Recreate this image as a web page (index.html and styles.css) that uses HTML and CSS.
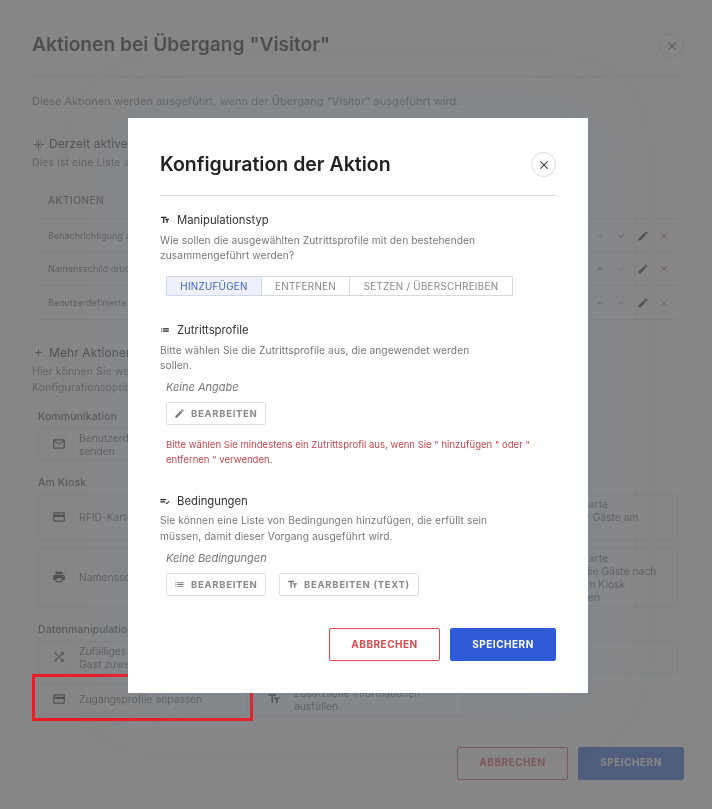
FILE: index.html
```html
<!DOCTYPE html>
<html lang="de">
<head>
<meta charset="utf-8">
<title>Aktionen</title>
<link rel="stylesheet" href="styles.css">
</head>
<body>
<svg class="sprite" xmlns="http://www.w3.org/2000/svg">
<symbol id="i-text" viewBox="0 0 24 24"><path d="M2.5 4v3h5v12h3V7h5V4h-13zm19 5h-9v3h3v7h3v-7h3V9z"/></symbol>
<symbol id="i-list" viewBox="0 0 24 24"><path d="M3 13h2v-2H3v2zm0 4h2v-2H3v2zm0-8h2V7H3v2zm4 4h14v-2H7v2zm0 4h14v-2H7v2zM7 7v2h14V7H7z"/></symbol>
<symbol id="i-edit" viewBox="0 0 24 24"><path d="M3 17.25V21h3.75L17.81 9.94l-3.75-3.75L3 17.25zM20.71 7.04c.39-.39.39-1.02 0-1.41l-2.34-2.34c-.39-.39-1.02-.39-1.41 0l-1.83 1.83 3.75 3.75 1.83-1.83z"/></symbol>
<symbol id="i-rule" viewBox="0 0 24 24"><path d="M1 7h13v3H1zM1 12.500h11v3H1zM13 16.500l3.300 3.300 6.700-6.700-1.500-1.500-5.200 5.200-1.800-1.800z"/></symbol>
<symbol id="i-mail" viewBox="0 0 24 24"><path d="M20 4H4c-1.100 0-1.990.9-1.990 2L2 18c0 1.100.9 2 2 2h16c1.100 0 2-.9 2-2V6c0-1.100-.9-2-2-2zm0 14H4V8l8 5 8-5v10zm-8-7L4 6h16l-8 5z"/></symbol>
<symbol id="i-card" viewBox="0 0 24 24"><path d="M20 4H4c-1.110 0-1.990.89-1.990 2L2 18c0 1.110.89 2 2 2h16c1.110 0 2-.89 2-2V6c0-1.110-.89-2-2-2zm0 14H4v-6h16v6zm0-10H4V6h16v2z"/></symbol>
<symbol id="i-print" viewBox="0 0 24 24"><path d="M19 8H5c-1.660 0-3 1.340-3 3v6h4v4h12v-4h4v-6c0-1.660-1.340-3-3-3zm-3 11H8v-5h8v5zm3-7c-.55 0-1-.45-1-1s.45-1 1-1 1 .45 1 1-.45 1-1 1zm-1-9H6v4h12V3z"/></symbol>
<symbol id="i-shuffle" viewBox="0 0 24 24"><path d="M10.590 9.170L5.410 4 4 5.410l5.170 5.170 1.420-1.410zM14.500 4l2.040 2.040L4 18.590 5.410 20 17.960 7.460 20 9.500V4h-5.500zm.33 9.410l-1.410 1.410 3.130 3.130L14.500 20H20v-5.500l-2.040 2.040-3.130-3.130z"/></symbol>
<symbol id="i-close" viewBox="0 0 24 24"><path d="M19 6.410L17.590 5 12 10.590 6.410 5 5 6.410 10.590 12 5 17.590 6.410 19 12 13.410 17.590 19 19 17.590 13.410 12z"/></symbol>
<symbol id="i-up" viewBox="0 0 24 24"><path d="M12 8l-6 6 1.410 1.410L12 10.830l4.590 4.580L18 14z"/></symbol>
<symbol id="i-down" viewBox="0 0 24 24"><path d="M16.590 8.590L12 13.170 7.410 8.590 6 10l6 6 6-6z"/></symbol>
<symbol id="i-add" viewBox="0 0 24 24"><path d="M19 13h-6v6h-2v-6H5v-2h6V5h2v6h6v2z"/></symbol>
<symbol id="i-flare" viewBox="0 0 24 24"><path d="M7 11H1v2h6v-2zm2.170-3.240L7.050 5.640 5.640 7.050l2.120 2.120 1.410-1.410zM13 1h-2v6h2V1zm5.360 6.050l-1.410-1.410-2.120 2.120 1.410 1.410 2.120-2.120zM17 11v2h6v-2h-6zm-5-2c-1.660 0-3 1.340-3 3s1.340 3 3 3 3-1.340 3-3-1.340-3-3-3zm2.830 7.240l2.120 2.120 1.410-1.410-2.120-2.120-1.410 1.410zm-9.190.71l1.410 1.410 2.120-2.120-1.410-1.410-2.120 2.120zM11 23h2v-6h-2v6z"/></symbol>
</svg>

<main class="page">
  <header class="head">
    <h1 class="page-title">Aktionen bei Übergang "Visitor"</h1>
    <button class="round-close"><svg class="ic14"><use href="#i-close"/></svg></button>
  </header>
  <p class="page-desc">Diese Aktionen werden ausgeführt, wenn der Übergang "Visitor" ausgeführt wird.</p>

  <h2 class="sec-title first"><svg class="ic12"><use href="#i-flare"/></svg>Derzeit aktive Aktionen</h2>
  <p class="sec-desc">Dies ist eine Liste aller derzeit aktiven Aktionen.</p>

  <section class="table">
    <div class="th">AKTIONEN</div>
    <div class="tr"><span>Benachrichtigung an Gastgeber</span><span class="acts"><svg class="dim"><use href="#i-up"/></svg><svg><use href="#i-down"/></svg><svg class="dark"><use href="#i-edit"/></svg><svg class="del"><use href="#i-close"/></svg></span></div>
    <div class="tr"><span>Namensschild drucken</span><span class="acts"><svg><use href="#i-up"/></svg><svg class="dim"><use href="#i-down"/></svg><svg class="dark"><use href="#i-edit"/></svg><svg class="del"><use href="#i-close"/></svg></span></div>
    <div class="tr"><span>Benutzerdefinierte Aktion</span><span class="acts"><svg><use href="#i-up"/></svg><svg class="dim"><use href="#i-down"/></svg><svg class="dark"><use href="#i-edit"/></svg><svg class="del"><use href="#i-close"/></svg></span></div>
  </section>

  <h2 class="sec-title second"><svg class="ic12"><use href="#i-add"/></svg>Mehr Aktionen</h2>
  <p class="sec-desc tall">Hier können Sie weitere Aktionen hinzufügen. Jede Aktion hat eigene<br>Konfigurationsoptionen.</p>

  <h3 class="group g1">Kommunikation</h3>
  <div class="cards">
    <div class="card h33"><svg class="card-ic"><use href="#i-mail"/></svg><span>Benutzerdefinierte E-Mail<br>senden</span></div>
  </div>

  <h3 class="group">Am Kiosk</h3>
  <div class="cards gap8">
    <div class="card h46"><svg class="card-ic"><use href="#i-card"/></svg><span>RFID-Karte ausstellen</span></div>
    <div class="card h46 empty"></div>
    <div class="card h46"><svg class="card-ic"><use href="#i-print"/></svg><span>Gedruckte QR-Karte<br>Ein Ausdruck für Gäste am<br>Kiosk</span></div>
    <div class="card h59"><svg class="card-ic"><use href="#i-print"/></svg><span>Namensschild drucken</span></div>
    <div class="card h59 empty"></div>
    <div class="card h59"><svg class="card-ic"><use href="#i-print"/></svg><span>Gedruckte QR-Karte<br>Eine QR-Karte, die Gäste nach<br>einem Besuch am Kiosk<br>ausdrucken lassen</span></div>
  </div>

  <h3 class="group g3">Datenmanipulation</h3>
  <div class="cards gap9">
    <div class="card h33"><svg class="card-ic"><use href="#i-shuffle"/></svg><span>Zufälliges Attribut dem<br>Gast zuweisen</span></div>
    <div class="card h33 empty"></div>
    <div class="card h33"></div>
    <div class="card h33"><svg class="card-ic"><use href="#i-card"/></svg><span>Zugangsprofile anpassen</span></div>
    <div class="card h33"><svg class="card-ic"><use href="#i-text"/></svg><span>Zusätzliche Informationen<br>ausfüllen</span></div>
  </div>

  <footer class="page-foot">
    <button class="btn btn-cancel">ABBRECHEN</button>
    <button class="btn btn-save">SPEICHERN</button>
  </footer>
</main>

<div class="overlay"></div>
<div class="highlight"></div>

<section class="modal">
  <header class="modal-head">
    <h2 class="modal-title">Konfiguration der Aktion</h2>
    <button class="round-close light"><svg class="ic14"><use href="#i-close"/></svg></button>
  </header>

  <h3 class="m-title m-first"><svg class="m-ic"><use href="#i-text"/></svg>Manipulationstyp</h3>
  <p class="m-desc">Wie sollen die ausgewählten Zutrittsprofile mit den bestehenden<br>zusammengeführt werden?</p>
  <div class="segments">
    <span class="seg active">HINZUFÜGEN</span><span class="seg s2">ENTFERNEN</span><span class="seg s3">SETZEN / ÜBERSCHREIBEN</span>
  </div>

  <h3 class="m-title m-second"><svg class="m-ic"><use href="#i-list"/></svg>Zutrittsprofile</h3>
  <p class="m-desc">Bitte wählen Sie die Zutrittsprofile aus, die angewendet werden<br>sollen.</p>
  <p class="none">Keine Angabe</p>
  <div class="tools"><button class="tool w100"><svg><use href="#i-edit"/></svg>BEARBEITEN</button></div>
  <p class="error">Bitte wählen Sie mindestens ein Zutrittsprofil aus, wenn Sie " hinzufügen " oder "<br>entfernen " verwenden.</p>

  <h3 class="m-title m-third"><svg class="m-ic"><use href="#i-rule"/></svg>Bedingungen</h3>
  <p class="m-desc loose">Sie können eine Liste von Bedingungen hinzufügen, die erfüllt sein<br>müssen, damit dieser Vorgang ausgeführt wird.</p>
  <p class="none n2">Keine Bedingungen</p>
  <div class="tools">
    <button class="tool w100"><svg><use href="#i-list"/></svg>BEARBEITEN</button>
    <button class="tool w140"><svg><use href="#i-text"/></svg>BEARBEITEN (TEXT)</button>
  </div>

  <footer class="modal-foot">
    <button class="btn btn-cancel">ABBRECHEN</button>
    <button class="btn btn-save">SPEICHERN</button>
  </footer>
</section>
</body>
</html>
```

FILE: styles.css
```css
* { box-sizing: border-box; }
html, body { margin: 0; padding: 0; }
body {
  width: 712px;
  height: 809px;
  overflow: hidden;
  position: relative;
  background: #fff;
  font-family: Inter, "Liberation Sans", sans-serif;
  color: #333;
  filter: blur(.3px);
}
h1, h2, h3, p { margin: 0; }
button { font-family: inherit; cursor: pointer; }
.sprite { display: none; }
svg { fill: currentColor; display: block; }

.page { padding: 0 28px 0 32px; height: 809px; }
.head {
  height: 77px;
  padding-top: 33px;
  display: flex;
  justify-content: space-between;
  align-items: flex-start;
  border-bottom: 1px solid #e2e2e2;
}
.page-title { margin-top: -1px; font-size: 19.200px; line-height: 24px; font-weight: 600; color: #222; }
.round-close {
  width: 25px; height: 25px; padding: 0;
  border: 1px solid #dcdcdc; border-radius: 50%;
  background: #fff; color: #555;
  display: flex; align-items: center; justify-content: center;
}
.ic14 { width: 14px; height: 14px; }
.ic12 { width: 11px; height: 11px; flex: none; color: #444; }
.page-desc { margin-top: 16px; font-size: 10.900px; line-height: 16px; color: #777; letter-spacing: .1px; }
.sec-title {
  display: flex; align-items: center; gap: 5px;
  font-size: 12px; line-height: 16px; font-weight: 400; color: #333;
  margin-left: 1px; letter-spacing: .1px;
}
.sec-title.first { margin-top: 27px; }
.sec-title.second { margin-top: 25px; }
.sec-desc { margin-top: 3px; font-size: 10.500px; line-height: 16px; color: #777; letter-spacing: .1px; }
.table { margin: 19px 6px 0; }
.th {
  height: 29px; padding: 0 10px;
  font-size: 10px; line-height: 20px; font-weight: 500; color: #666; letter-spacing: .5px;
  border-bottom: 1px solid #e8e8e8;
}
.tr {
  height: 33.500px; padding: 0 8px 0 10px;
  display: flex; justify-content: space-between; align-items: center;
  font-size: 9px; color: #666;
  border-bottom: 1px solid #e8e8e8;
}
.acts { display: flex; gap: 9.500px; padding-top: 1px; color: #777; }
.acts svg { width: 12px; height: 12px; }
.acts .dim { color: #bbb; }
.acts .dark { color: #333; }
.acts .del { color: #e08a8a; }

.tall { line-height: 16px; }
.group {
  margin: 15px 6px 5px; font-size: 10.500px; line-height: 13px; font-weight: 500; color: #555;
  letter-spacing: .1px;
}
.group.g1 { margin-top: 14px; }
.group.g3 { margin-top: 16px; }
.cards {
  margin: 0 6px;
  display: grid;
  grid-template-columns: 210px 210px 210px;
  column-gap: 5px;
}
.gap8 { row-gap: 8px; }
.gap9 { row-gap: 9px; }
.card {
  border: 1px solid #e8e8e8;
  display: flex; align-items: center;
  padding-left: 13px; gap: 13px;
  font-size: 10.300px; line-height: 13px; color: #666;
}
.card span { padding-top: 1px; }
.h33 { height: 33px; }
.h46 { height: 46px; }
.h59 { height: 59px; }
.empty { visibility: hidden; }
.card-ic { width: 14px; height: 14px; flex: none; color: #333; }

.page-foot {
  margin-top: 31px;
  display: flex; justify-content: flex-end; gap: 10px;
}
.btn {
  height: 33px; border-radius: 2px;
  font-size: 10px; font-weight: 700; letter-spacing: .5px;
  padding: 0 0 2px;
}
.btn-cancel { width: 111px; background: #fff; border: 1px solid #dc4a50; color: #dc4a50; }
.btn-save { width: 106px; background: #2f5bd8; border: 1px solid #2f5bd8; color: #fff; }

.overlay {
  position: absolute; inset: 0;
  background: rgba(93, 93, 93, .75);
}
.highlight {
  position: absolute; left: 32px; top: 674px;
  width: 221px; height: 47px;
  border: 3px solid #ed1c24;
}
.modal {
  position: absolute; left: 128px; top: 118px;
  width: 460px; height: 575px;
  padding: 0 32px;
  background: #fff;
  box-shadow: 0 0 60px rgba(110, 150, 190, .28);
}
.modal-head {
  height: 78px; padding-top: 34px;
  display: flex; justify-content: space-between; align-items: flex-start;
  border-bottom: 1px solid #e0e0e0;
}
.modal-title { font-size: 19.500px; line-height: 24px; font-weight: 600; color: #222; }
.round-close.light { color: #444; margin-top: 0; }

.m-title {
  display: flex; align-items: center; gap: 7px;
  font-size: 11.300px; line-height: 16px; font-weight: 400; color: #333;
}
.m-ic { width: 10px; height: 10px; flex: none; color: #222; }
.m-first { margin-top: 16px; }
.m-second { margin-top: 26px; }
.m-third { margin-top: 26px; }
.m-desc { margin-top: 5px; font-size: 10.200px; line-height: 15px; color: #777; letter-spacing: .1px; }
.m-desc.loose { margin-top: 3px; line-height: 16px; }

.segments { margin: 13px 0 0 6px; display: flex; height: 20px; }
.seg {
  display: flex; align-items: center; justify-content: center;
  border: 1px solid #d9d9d9; border-left: 0;
  font-size: 9.800px; color: #888; letter-spacing: .3px;
}
.seg.active {
  width: 96px; border: 1px solid #cfd6ee;
  background: #eef1fb; color: #3f62d9;
}
.s2 { width: 88px; }
.s3 { width: 163px; }

.none { margin: 6px 0 0 6px; font-size: 11px; line-height: 16px; font-style: italic; color: #777; }
.n2 { margin-top: 6px; }
.tools { margin: 7px 0 0 6px; display: flex; gap: 13px; }
.tool {
  height: 23px; padding: 0 0 0 7px;
  display: flex; align-items: center; gap: 6px;
  background: #fff; border: 1px solid #e0e0e0; border-radius: 2px;
  font-size: 9.500px; font-weight: 700; color: #8a8a8a; letter-spacing: .7px;
}
.tool svg { width: 11px; height: 11px; flex: none; color: #777; }
.w100 { width: 100px; }
.w140 { width: 140px; }
.error { margin: 12px 0 0 6px; font-size: 9.560px; line-height: 15px; color: #c8474f; }

.modal-foot { margin-top: 32px; display: flex; justify-content: flex-end; gap: 10px; }
```
